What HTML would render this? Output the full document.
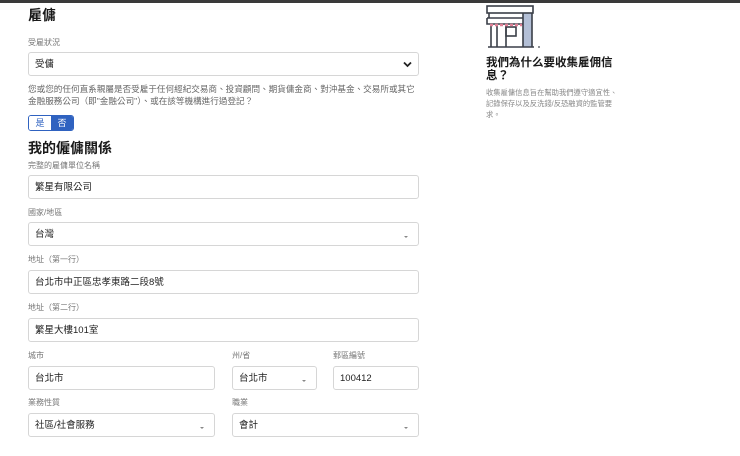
<!DOCTYPE html>
<html><head><meta charset="utf-8"><style>
*{margin:0;padding:0;box-sizing:border-box}
body{width:740px;height:456px;background:#fff;position:relative;overflow:hidden;font-family:"Liberation Sans","Noto Sans CJK TC",sans-serif;color:#222}
.bar{position:absolute;left:0;top:0;width:740px;height:3px;background:#3a3a3a}
.a{position:absolute}
.h{font-size:14px;font-weight:bold;color:#1a1a1a}
.l{font-size:8px;color:#777}
.in{position:absolute;height:24px;border:1px solid #d6d6d6;border-radius:3px;font-size:9.5px;padding-left:6px;padding-top:1px;line-height:22px;color:#222}
.dd::after{content:"";position:absolute;right:10px;top:13px;border-left:2px solid transparent;border-right:2px solid transparent;border-top:2px solid #888}
</style></head><body>
<div class="bar"></div>
<div class="a h" style="left:28px;top:5px">雇傭</div>
<div class="a l" style="left:28px;top:37px">受雇狀況</div>
<div class="in" style="left:28px;top:52px;width:391px">受傭<svg style="position:absolute;right:6px;top:8px" width="9" height="7" viewBox="0 0 9 7"><path d="M1 1.5L4.5 5L8 1.5" stroke="#222" stroke-width="1.8" fill="none"/></svg></div>
<div class="a" style="left:28px;top:83px;font-size:8.6px;color:#666;line-height:12px;white-space:nowrap">您或您的任何直系親屬是否受雇于任何經紀交易商、投資顧問、期貨傭金商、對沖基金、交易所或其它<br>金融服務公司（即"金融公司"）、或在該等機構進行過登記？</div>
<div class="a" style="left:28px;top:115px;width:46px;height:16px;border:1px solid #2f62c0;border-radius:3px;overflow:hidden;font-size:9px;display:flex">
<div style="width:22px;background:#fff;color:#2f62c0;text-align:center;line-height:14px">是</div>
<div style="flex:1;background:#2f62c0;color:#fff;text-align:center;line-height:14px">否</div></div>
<div class="a h" style="left:28px;top:138px">我的僱傭關係</div>
<div class="a l" style="left:28px;top:160px">完整的雇傭單位名稱</div>
<div class="in" style="left:28px;top:175px;width:391px">繁星有限公司</div>
<div class="a l" style="left:28px;top:207px">國家/地區</div>
<div class="in dd" style="left:28px;top:222px;width:391px">台灣</div>
<div class="a l" style="left:28px;top:254px">地址（第一行）</div>
<div class="in" style="left:28px;top:270px;width:391px">台北市中正區忠孝東路二段8號</div>
<div class="a l" style="left:28px;top:302px">地址（第二行）</div>
<div class="in" style="left:28px;top:318px;width:391px">繁星大樓101室</div>
<div class="a l" style="left:28px;top:350px">城市</div>
<div class="a l" style="left:232px;top:350px">州/省</div>
<div class="a l" style="left:333px;top:350px">郵區編號</div>
<div class="in" style="left:28px;top:366px;width:187px">台北市</div>
<div class="in dd" style="left:232px;top:366px;width:85px">台北市</div>
<div class="in" style="left:333px;top:366px;width:86px">100412</div>
<div class="a l" style="left:28px;top:397px">業務性質</div>
<div class="a l" style="left:232px;top:397px">職業</div>
<div class="in dd" style="left:28px;top:413px;width:187px">社區/社會服務</div>
<div class="in dd" style="left:232px;top:413px;width:187px">會計</div>

<svg class="a" style="left:480px;top:0px" width="70" height="55" viewBox="0 0 70 55">
<rect x="43" y="13" width="9" height="34" fill="#b3bfd6"/>
<g stroke="#3a3f48" stroke-width="1.6" fill="none">
<rect x="7" y="6" width="46" height="7"/>
<path d="M9 13V18M43 13V47M52 13V47M7 18H43M7 18V24H43"/>
<path d="M11 24V47M17 26V47M26 26V47M8 47H54"/>
<rect x="26" y="27" width="10" height="9"/>
</g>
<g stroke="#e07f95" stroke-width="2.5"><path d="M10 25H13M15 25H18M20 25H23M25 25H28M30 25H33M35 25H38M40 25H42"/></g>
<circle cx="59" cy="47" r="0.9" fill="#3a3f48"/>
</svg>
<div class="a" style="left:486px;top:57px;font-size:11.5px;font-weight:bold;line-height:13px;width:130px;color:#1a1a1a">我們為什么要收集雇佣信<br>息？</div>
<div class="a" style="left:486px;top:87px;font-size:7.3px;color:#888;line-height:11px;white-space:nowrap">收集雇傭信息旨在幫助我們遵守適宜性、<br>記錄保存以及反洗錢/反恐融資的監管要<br>求。</div>
</body></html>
